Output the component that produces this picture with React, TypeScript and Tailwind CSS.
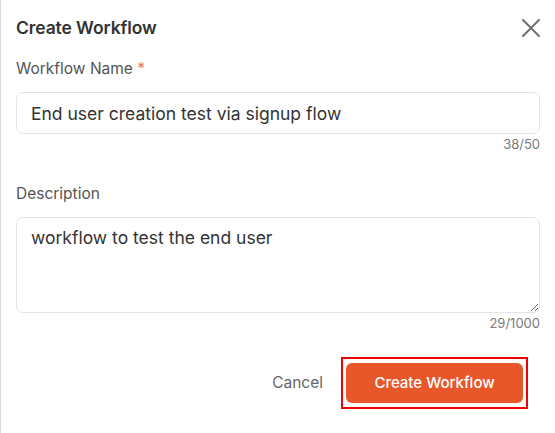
import React from "react";

export default function App() {
  return (
    <div
      className="w-[555px] h-[433px] bg-white border-l border-[#dcdcdc] pl-[15px] pr-[15px] overflow-hidden"
      style={{ fontFamily: "Inter, 'Noto Sans', sans-serif" }}
    >
      <div className="flex items-center justify-between mt-[16px] h-[24px]">
        <h2 className="text-[17.5px] font-semibold text-[#333] tracking-[-0.1px]">Create Workflow</h2>
        <svg width="18" height="18" viewBox="0 0 18 18" className="mr-0">
          <path d="M1 1 L17 17 M17 1 L1 17" stroke="#6b6b6b" strokeWidth="1.8" strokeLinecap="round" />
        </svg>
      </div>

      <label className="block mt-[19px] h-[20px] leading-[20px] text-[15.5px] text-[#555]">
        Workflow Name <span className="text-[#f0735a]">*</span>
      </label>
      <input
        readOnly
        defaultValue="End user creation test via signup flow"
        className="mt-[13px] block w-full h-[42px] rounded-[7px] border border-[#e4e4e4] px-[14px] text-[17.5px] text-[#333] outline-none"
      />
      <div className="mt-[2px] h-[16px] leading-[16px] text-right text-[13px] text-[#7a7a7a]">38/50</div>

      <label className="block mt-[32px] h-[20px] leading-[20px] text-[15.5px] text-[#555]">Description</label>
      <textarea
        readOnly
        defaultValue="workflow to test the end user"
        className="mt-[13px] block w-full h-[96px] rounded-[7px] border border-[#e4e4e4] px-[14px] pt-[8px] text-[17.5px] leading-[24px] text-[#333] outline-none resize-y"
      />
      <div className="mt-[2px] h-[16px] leading-[16px] text-right text-[13px] text-[#7a7a7a]">29/1000</div>

      <div className="mt-[26px] flex items-center justify-end gap-[18px] mr-[12px]">
        <button className="text-[15.5px] text-[#666]">Cancel</button>
        <div className="border-2 border-[#f00000] px-[3px] py-[4px]">
          <button className="w-[177px] h-[40px] rounded-[6px] bg-[#e8572a] text-white text-[15px] font-medium">
            Create Workflow
          </button>
        </div>
      </div>
    </div>
  );
}
